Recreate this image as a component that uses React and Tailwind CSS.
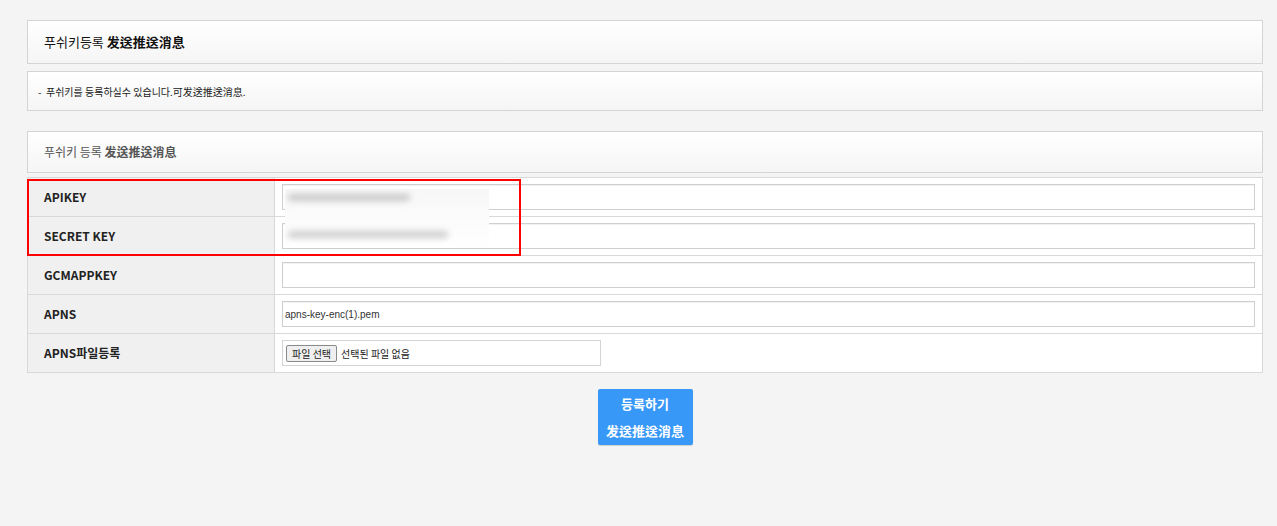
import React from "react";

const font = { fontFamily: '"Noto Sans CJK KR", "Noto Sans", sans-serif' };

function Row({ label, children, last }) {
  return (
    <div className={`flex ${last ? "h-[38px]" : "h-[39px] border-b border-[#d9d9d9]"}`}>
      <div className="w-[247px] shrink-0 bg-[#f0f0f0] border-r border-[#d9d9d9] flex items-center pl-[16px] text-[12px] font-bold text-[#222]">
        {label}
      </div>
      <div className="flex-1 bg-white flex items-center px-[7px]">{children}</div>
    </div>
  );
}

function TextBox({ children }) {
  return (
    <div
      style={{ fontFamily: '"Liberation Sans", Arial, sans-serif' }}
      className="w-full h-[26px] border border-[#cfcfcf] shadow-[inset_0_1px_1px_rgba(0,0,0,0.06)] bg-white flex items-center pl-[2px] text-[10px] text-[#333]"
    >
      {children}
    </div>
  );
}

export default function App() {
  return (
    <div style={font} className="w-[1277px] h-[526px] bg-[#f4f4f4] pl-[27px] pr-[14px] pt-[20px] overflow-hidden">
      <div className="h-[44px] border border-[#d4d4d4] bg-gradient-to-b from-white to-[#f5f5f5] flex items-center pl-[16px] text-[13px] text-[#111]">
        <span>푸쉬키등록&nbsp;</span>
        <span className="font-bold">发送推送消息</span>
      </div>
      <div className="mt-[7px] h-[40px] border border-[#d4d4d4] bg-gradient-to-b from-white to-[#f5f5f5] flex items-center pl-[10px] text-[10px] text-[#222]">
        -&nbsp; 푸쉬키를 등록하실수 있습니다.可发送推送消息.
      </div>
      <div className="mt-[20px] h-[42px] border border-[#d4d4d4] bg-gradient-to-b from-white to-[#f5f5f5] flex items-center pl-[16px] text-[12px] text-[#555]">
        <span>푸쉬키 등록&nbsp;</span>
        <span className="font-bold">发送推送消息</span>
      </div>
      <div className="relative mt-[4px] border border-[#d9d9d9]">
        <Row label="APIKEY">
          <TextBox />
        </Row>
        <Row label="SECRET KEY">
          <TextBox />
        </Row>
        <Row label="GCMAPPKEY">
          <TextBox />
        </Row>
        <Row label="APNS">
          <TextBox>apns-key-enc(1).pem</TextBox>
        </Row>
        <Row label="APNS파일등록" last>
          <div className="w-[319px] h-[26px] border border-[#d4d4d4] bg-white flex items-center pl-[3px] text-[11px] text-[#222]">
            <span className="h-[17px] px-[5px] border border-[#8a8a8a] rounded-[2px] bg-[#efefef] flex items-center text-[10px]">파일 선택</span>
            <span className="ml-[4px] text-[10px]">선택된 파일 없음</span>
          </div>
        </Row>
        <div className="absolute left-[257px] top-[11px] w-[204px] h-[59px] bg-gradient-to-b from-[#f7f7f7] to-white">
          <div className="mt-[5px] ml-[3px] h-[7px] w-[122px] bg-[#c8c8c8] blur-[3px] rounded" />
          <div className="mt-[30px] ml-[3px] h-[7px] w-[160px] bg-[#cdcdcd] blur-[3px] rounded" />
        </div>
        <div className="absolute -left-px top-[1px] w-[494px] h-[77px] border-2 border-[#ff0000]" />
      </div>
      <div className="flex justify-center pt-[16px]">
        <div className="w-[95px] h-[56px] bg-[#3898f8] rounded-[2px] flex flex-col items-center justify-center text-white text-[13px] font-bold leading-[27px] shadow-[0_1px_1px_rgba(0,0,0,0.15)]">
          <span>등록하기</span>
          <span>发送推送消息</span>
        </div>
      </div>
    </div>
  );
}
